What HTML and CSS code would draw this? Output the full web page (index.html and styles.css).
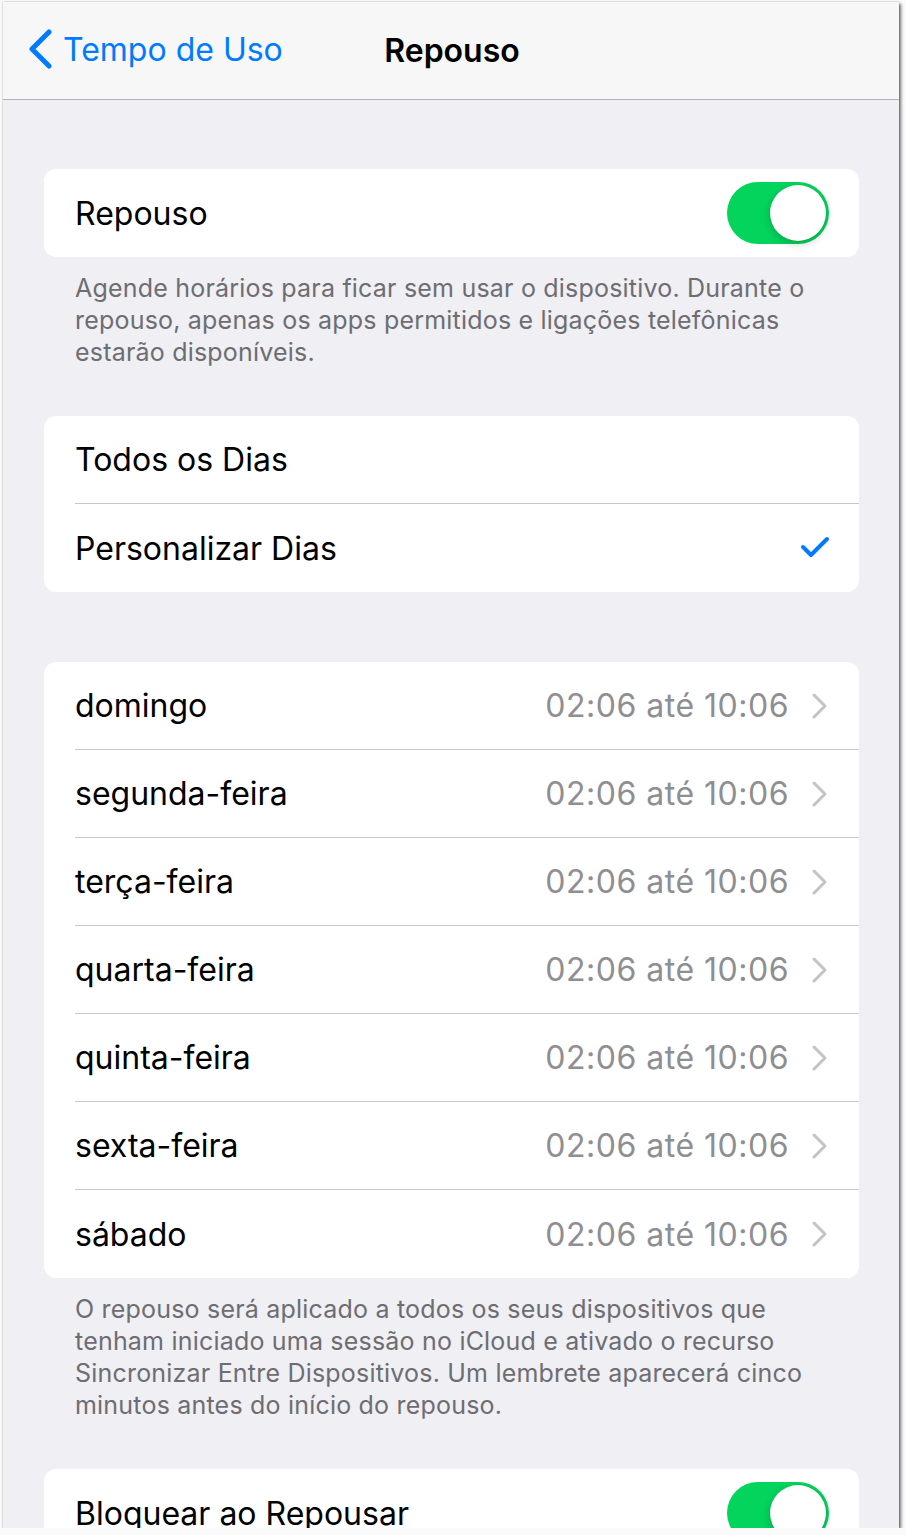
FILE: index.html
```html
<!DOCTYPE html>
<html lang="pt">
<head>
  <meta charset="UTF-8">
  <meta name="viewport" content="width=device-width, initial-scale=1.0">
  <title>Repouso</title>
  <link rel="stylesheet" href="styles.css">
</head>
<body>
  <div class="screen">
    <div class="navbar">
      <div class="back">
        <svg class="back-icon" width="26" height="40" viewBox="0 0 26 40">
          <polyline points="21,3 4,20 21,37" fill="none" stroke="#007aff" stroke-width="5" stroke-linecap="round" stroke-linejoin="round"/>
        </svg>
        <span>Tempo de Uso</span>
      </div>
      <div class="nav-title">Repouso</div>
    </div>

    <div class="content">
      <div class="group">
        <div class="row">
          <span class="label">Repouso</span>
          <div class="toggle"><div class="knob"></div></div>
        </div>
      </div>
      <p class="footer">Agende horários para ficar sem usar o dispositivo. Durante o repouso, apenas os apps permitidos e ligações telefônicas estarão disponíveis.</p>

      <div class="group">
        <div class="row">
          <span class="label">Todos os Dias</span>
        </div>
        <div class="row">
          <span class="label">Personalizar Dias</span>
          <svg class="check" width="30" height="24" viewBox="0 0 30 24">
            <polyline points="3,11 11,19 27,3" fill="none" stroke="#007aff" stroke-width="4" stroke-linecap="round" stroke-linejoin="round"/>
          </svg>
        </div>
      </div>

      <div class="group days" id="days"></div>
      <p class="footer">O repouso será aplicado a todos os seus dispositivos que tenham iniciado uma sessão no iCloud e ativado o recurso Sincronizar Entre Dispositivos. Um lembrete aparecerá cinco minutos antes do início do repouso.</p>

      <div class="group">
        <div class="row">
          <span class="label">Bloquear ao Repousar</span>
          <div class="toggle"><div class="knob"></div></div>
        </div>
      </div>
    </div>
  </div>

  <script>
    const days = ["domingo", "segunda-feira", "terça-feira", "quarta-feira", "quinta-feira", "sexta-feira", "sábado"];
    const list = document.getElementById("days");

    days.forEach(day => {
      const row = document.createElement("div");
      row.className = "row";
      row.innerHTML =
        '<span class="label">' + day + '</span>' +
        '<span class="value">02:06 até 10:06</span>' +
        '<svg class="chevron" width="18" height="28" viewBox="0 0 18 28">' +
        '<polyline points="3,3 14,14 3,25" fill="none" stroke="#c4c4c8" stroke-width="3" stroke-linecap="round" stroke-linejoin="round"/>' +
        '</svg>';
      list.appendChild(row);
    });
  </script>
</body>
</html>
```

FILE: styles.css
```css
body {
  margin: 0;
  background: #fafafa;
  font-family: "Inter", "Noto Sans", sans-serif;
  overflow: hidden;
}

.screen {
  width: 896px;
  height: 1526px;
  margin: 2px 0 0 3px;
  background: #efeff4;
  overflow: hidden;
  box-shadow: 2px 2px 3px rgba(0, 0, 0, 0.55), 0 0 2px rgba(0, 0, 0, 0.25);
}

.navbar {
  height: 97px;
  background: #f7f7f8;
  border-bottom: 1px solid #b3b3b6;
  display: flex;
  align-items: center;
  justify-content: center;
  position: relative;
}

.back {
  position: absolute;
  left: 25px;
  top: 27px;
  display: flex;
  align-items: center;
  gap: 9px;
  color: #007aff;
  font-size: 32px;
}

.nav-title {
  font-size: 32px;
  font-weight: 600;
  color: #000;
  margin-left: 2px;
}

.content {
  padding: 69px 40px 0 41px;
}

.group {
  background: #fff;
  border-radius: 12px;
  padding-left: 31px;
}

.row {
  height: 88px;
  display: flex;
  align-items: center;
  padding-right: 30px;
  border-bottom: 1px solid #c8c7cc;
  box-sizing: border-box;
}

.row:last-child {
  border-bottom: none;
}

.label {
  flex: 1;
  font-size: 32px;
  color: #000;
}

.value {
  font-size: 32px;
  color: #8e8e93;
  margin-right: 22px;
  letter-spacing: 0.5px;
}

.chevron {
  display: block;
}

.check {
  display: block;
  margin-right: -1px;
}

.toggle {
  width: 102px;
  height: 62px;
  border-radius: 31px;
  background: #03d45c;
  position: relative;
}

.knob {
  position: absolute;
  right: 3px;
  top: 3px;
  width: 56px;
  height: 56px;
  border-radius: 50%;
  background: #fff;
  box-shadow: 0 3px 8px rgba(0, 0, 0, 0.2), 0 0 1px rgba(0, 0, 0, 0.15);
}

.footer {
  margin: 0;
  padding: 15px 31px 48px;
  font-size: 25px;
  line-height: 32px;
  color: #6d6d72;
  letter-spacing: 0.2px;
}

.days {
  margin-top: 70px;
}
```
